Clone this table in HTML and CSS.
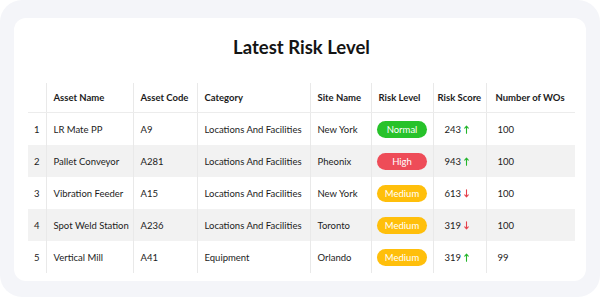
FILE: index.html
```html
<!DOCTYPE html>
<html>
<head>
<meta charset="utf-8">
<link rel="stylesheet" href="styles.css">
</head>
<body>
<div class="frame">
  <div class="card">
    <h1 class="title">Latest Risk Level</h1>
    <table class="risk">
      <colgroup>
        <col class="c-idx"><col class="c-name"><col class="c-code"><col class="c-cat"><col class="c-site"><col class="c-level"><col class="c-score"><col class="c-wo">
      </colgroup>
      <thead>
        <tr>
          <th class="idx"></th>
          <th>Asset Name</th>
          <th>Asset Code</th>
          <th>Category</th>
          <th>Site Name</th>
          <th>Risk Level</th>
          <th class="h-score">Risk Score</th>
          <th class="h-wo">Number of WOs</th>
        </tr>
      </thead>
      <tbody>
        <tr>
          <td class="idx">1</td><td>LR Mate PP</td><td>A9</td><td>Locations And Facilities</td><td>New York</td>
          <td class="lvl"><span class="badge normal">Normal</span></td>
          <td class="score">243 <svg class="arr up" viewBox="0 0 6 10" width="5" height="9"><path d="M3 9.5V1M0.9 3.3L3 1L5.1 3.3"/></svg></td>
          <td class="wo">100</td>
        </tr>
        <tr>
          <td class="idx">2</td><td>Pallet Conveyor</td><td>A281</td><td>Locations And Facilities</td><td>Pheonix</td>
          <td class="lvl"><span class="badge high">High</span></td>
          <td class="score">943 <svg class="arr up" viewBox="0 0 6 10" width="5" height="9"><path d="M3 9.5V1M0.9 3.3L3 1L5.1 3.3"/></svg></td>
          <td class="wo">100</td>
        </tr>
        <tr>
          <td class="idx">3</td><td>Vibration Feeder</td><td>A15</td><td>Locations And Facilities</td><td>New York</td>
          <td class="lvl"><span class="badge medium">Medium</span></td>
          <td class="score">613 <svg class="arr down" viewBox="0 0 6 10" width="5" height="9"><path d="M3 0.5V9M0.9 6.7L3 9L5.1 6.7"/></svg></td>
          <td class="wo">100</td>
        </tr>
        <tr>
          <td class="idx">4</td><td>Spot Weld Station</td><td>A236</td><td>Locations And Facilities</td><td>Toronto</td>
          <td class="lvl"><span class="badge medium">Medium</span></td>
          <td class="score">319 <svg class="arr down" viewBox="0 0 6 10" width="5" height="9"><path d="M3 0.5V9M0.9 6.7L3 9L5.1 6.7"/></svg></td>
          <td class="wo">100</td>
        </tr>
        <tr>
          <td class="idx">5</td><td>Vertical Mill</td><td>A41</td><td>Equipment</td><td>Orlando</td>
          <td class="lvl"><span class="badge medium">Medium</span></td>
          <td class="score">319 <svg class="arr up" viewBox="0 0 6 10" width="5" height="9"><path d="M3 9.5V1M0.9 3.3L3 1L5.1 3.3"/></svg></td>
          <td class="wo">99</td>
        </tr>
      </tbody>
    </table>
  </div>
</div>
</body>
</html>
```
FILE: styles.css
```css
html, body {
  margin: 0;
  padding: 0;
  background: #ffffff;
}
body {
  font-family: Lato, "Open Sans", sans-serif;
  color: #1c1c1c;
}
.frame {
  width: 600px;
  height: 297px;
  box-sizing: border-box;
  background: #f4f5f9;
  border-radius: 22px;
  padding: 18px 14px 16px 14px;
  display: flex;
}
.card {
  flex: 1;
  background: #ffffff;
  border-radius: 12px;
  padding: 17px 11px 0 14px;
  display: flex;
  flex-direction: column;
}
.title {
  margin: 0 0 24px 0;
  text-align: center;
  font-size: 18.5px;
  line-height: 24px;
  font-weight: 700;
  color: #141414;
}
.risk {
  border-collapse: collapse;
  table-layout: fixed;
  width: 547px;
  font-size: 9.5px;
}
.c-idx { width: 18px; }
.c-name { width: 87px; }
.c-code { width: 64px; }
.c-cat { width: 113px; }
.c-site { width: 61px; }
.c-level { width: 62px; }
.c-score { width: 53px; }
.c-wo { width: 89px; }
.risk th, .risk td {
  text-align: left;
  padding: 0 0 0 7px;
  white-space: nowrap;
  overflow: hidden;
  border-left: 1px solid #e9e9e9;
}
.risk th.idx, .risk td.idx {
  border-left: none;
  padding: 0;
  text-align: center;
}
.risk thead th {
  height: 29px;
  font-weight: 700;
  border-bottom: 1px solid #ececec;
  vertical-align: middle;
}
.risk th.h-score { padding-left: 4px; }
.risk th.h-wo { padding-left: 9px; }
.risk tbody td {
  height: 32px;
  vertical-align: middle;
}
.risk tbody tr:nth-child(even) td {
  background: #f2f2f2;
}
.risk td.lvl {
  text-align: center;
  padding: 0;
}
.badge {
  display: inline-block;
  width: 50px;
  height: 17px;
  line-height: 17px;
  border-radius: 9px;
  color: #ffffff;
  font-size: 9.5px;
  text-align: center;
  vertical-align: middle;
}
.badge.normal { background: #27c22a; }
.badge.high { background: #ee4c58; }
.badge.medium { background: #ffbf0b; }
.risk td.score { padding-left: 11px; }
.risk td.wo { padding-left: 11px; }
.arr {
  vertical-align: -1px;
  margin-left: 1px;
  fill: none;
  stroke-width: 1.3;
  stroke-linecap: round;
  stroke-linejoin: round;
}
.arr.up { stroke: #23b52a; }
.arr.down { stroke: #e5414c; }
```
